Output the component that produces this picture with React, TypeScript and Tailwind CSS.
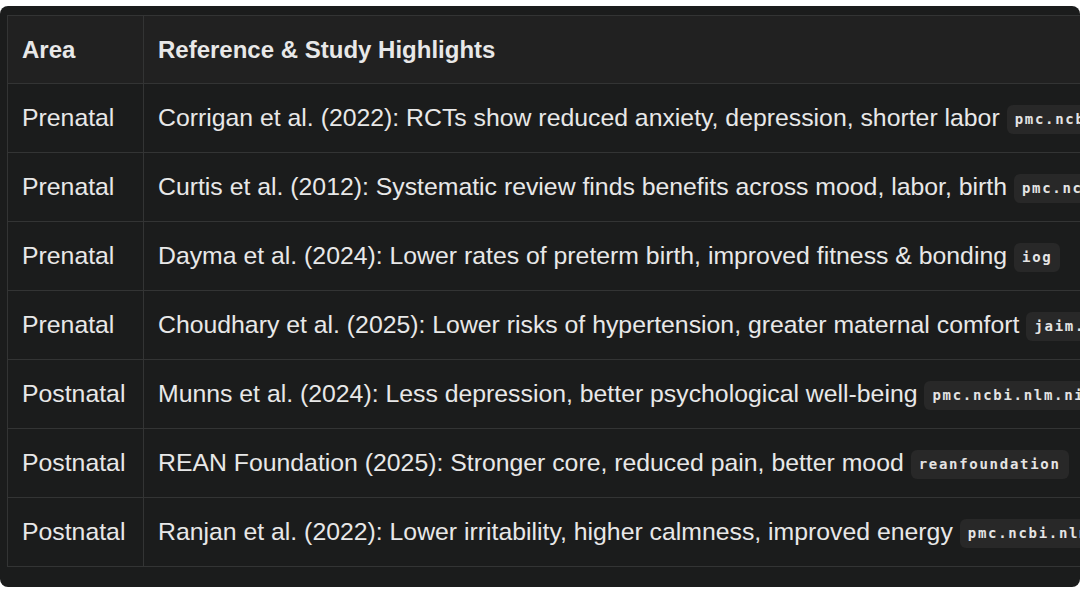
import React from 'react';

type Row = {
  area: string;
  text: string;
  source: string;
};

const rows: Row[] = [
  { area: 'Prenatal', text: 'Corrigan et al. (2022): RCTs show reduced anxiety, depression, shorter labor', source: 'pmc.ncbi.nlm.nih.gov' },
  { area: 'Prenatal', text: 'Curtis et al. (2012): Systematic review finds benefits across mood, labor, birth', source: 'pmc.ncbi.nlm.nih.gov' },
  { area: 'Prenatal', text: 'Dayma et al. (2024): Lower rates of preterm birth, improved fitness & bonding', source: 'iog' },
  { area: 'Prenatal', text: 'Choudhary et al. (2025): Lower risks of hypertension, greater maternal comfort', source: 'jaim.in' },
  { area: 'Postnatal', text: 'Munns et al. (2024): Less depression, better psychological well-being', source: 'pmc.ncbi.nlm.nih.gov' },
  { area: 'Postnatal', text: 'REAN Foundation (2025): Stronger core, reduced pain, better mood', source: 'reanfoundation' },
  { area: 'Postnatal', text: 'Ranjan et al. (2022): Lower irritability, higher calmness, improved energy', source: 'pmc.ncbi.nlm.nih.gov' },
];

function SourceChip({ label }: { label: string }) {
  return (
    <code className="ml-[7px] inline-block rounded-md bg-[#282828] px-2 py-[6px] align-middle font-['DejaVu_Sans_Mono',monospace] text-[14px] leading-[17px] font-bold tracking-[1.7px] text-[#e4e4e4]">
      {label}
    </code>
  );
}

export default function App() {
  return (
    <div className="h-[597px] w-[1080px] bg-white pt-[6px] font-['Liberation_Sans',Arial,sans-serif]">
      <div className="h-[581px] w-[1080px] overflow-hidden rounded-lg bg-[#1b1c1c] pt-[9px] pl-[7px]">
        <table className="border-collapse text-[24.8px] whitespace-nowrap text-[#e8e8e8]">
          <thead>
            <tr className="h-[68px] bg-[#212121] text-[24px]">
              <th className="w-[136px] min-w-[136px] border border-[#333434] px-[14px] text-left font-bold">Area</th>
              <th className="border border-[#333434] px-[14px] text-left font-bold">Reference &amp; Study Highlights</th>
            </tr>
          </thead>
          <tbody>
            {rows.map((r, i) => (
              <tr key={i} className="h-[69px]">
                <td className="border border-[#333434] px-[14px]">{r.area}</td>
                <td className="border border-[#333434] px-[14px]">
                  {r.text}
                  <SourceChip label={r.source} />
                </td>
              </tr>
            ))}
          </tbody>
        </table>
      </div>
    </div>
  );
}
